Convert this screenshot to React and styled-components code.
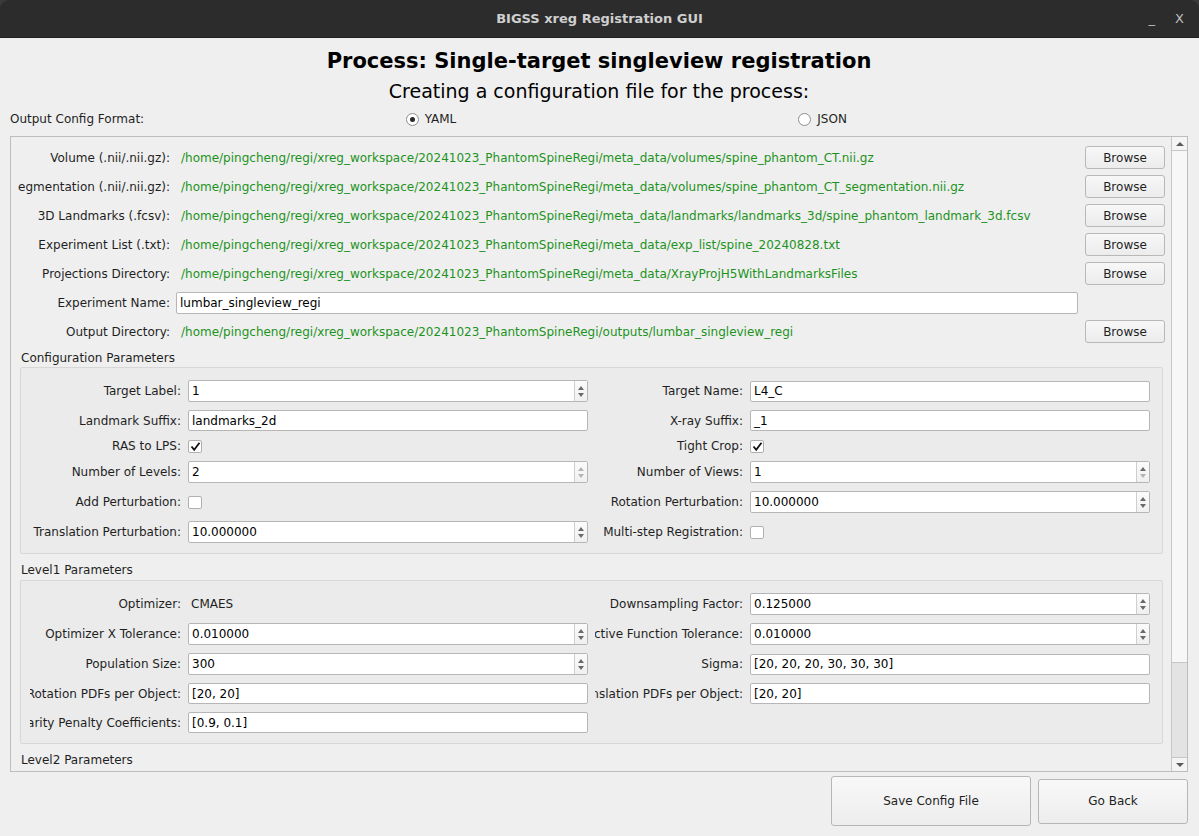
import React from "react";
import styled, { createGlobalStyle } from "styled-components";

const GlobalStyle = createGlobalStyle`
  html, body {
    margin: 0;
    padding: 0;
    background: #3a3a3a;
  }
  body {
    font-family: "DejaVu Sans", "Liberation Sans", sans-serif;
    font-size: 12px;
    color: #1f1f1f;
  }
  * {
    box-sizing: border-box;
  }
`;

const Window = styled.div`
  width: 1199px;
  height: 836px;
  display: flex;
  flex-direction: column;
  overflow: hidden;
`;

const TitleBar = styled.div`
  height: 38px;
  flex: none;
  background: #2c2c2c;
  border-radius: 9px 9px 0 0;
  display: flex;
  align-items: center;
  justify-content: center;
  position: relative;
  color: #cfcfcf;
  font-weight: bold;
  font-size: 13px;
  border-bottom: 1px solid #1f1f1f;
`;

const WindowControls = styled.div`
  position: absolute;
  right: 15px;
  top: 0;
  height: 100%;
  display: flex;
  align-items: center;
  gap: 20px;
  font-weight: normal;
  font-size: 13px;
  color: #bdbdbd;
`;

const Body = styled.div`
  flex: 1;
  background: #efefef;
  display: flex;
  flex-direction: column;
  padding: 11px 11px 0 10px;
  min-height: 0;
`;

const Heading = styled.div`
  text-align: center;
  font-weight: bold;
  font-size: 21px;
  color: #000;
  line-height: 24px;
`;

const SubHeading = styled.div`
  text-align: center;
  font-size: 19px;
  color: #000;
  line-height: 24px;
  margin-top: 6px;
`;

const FormatRow = styled.div`
  display: grid;
  grid-template-columns: 1fr 1fr 1fr;
  align-items: center;
  height: 20px;
  margin-top: 6px;
`;

const RadioItem = styled.label`
  display: flex;
  align-items: center;
  gap: 6px;
  padding-left: 3px;
`;

const RadioCircle = styled.span`
  width: 13px;
  height: 13px;
  border-radius: 50%;
  border: 1px solid #8e8e8e;
  background: #fff;
  display: flex;
  align-items: center;
  justify-content: center;

  &::after {
    content: "";
    display: ${(p) => (p.checked ? "block" : "none")};
    width: 5px;
    height: 5px;
    border-radius: 50%;
    background: #2a2a2a;
  }
`;

const ScrollArea = styled.div`
  margin-top: 7px;
  height: 636px;
  flex: none;
  border: 1px solid #bdbdbd;
  display: flex;
  background: #efefef;
`;

const ScrollContent = styled.div`
  flex: 1;
  overflow: hidden;
  padding: 9px 7px 0 7px;
  display: flex;
  flex-direction: column;
`;

const ScrollBar = styled.div`
  width: 16px;
  flex: none;
  border-left: 1px solid #c6c6c6;
  background: #e3e3e3;
  display: flex;
  flex-direction: column;
`;

const ScrollArrow = styled.div`
  height: 14px;
  flex: none;
  background: #f4f4f4;
  display: flex;
  align-items: center;
  justify-content: center;
  border-${(p) => (p.down ? "top" : "bottom")}: 1px solid #c6c6c6;

  &::after {
    content: "";
    border-left: 4px solid transparent;
    border-right: 4px solid transparent;
    border-${(p) => (p.down ? "top" : "bottom")}: 4px solid #5a5a5a;
  }
`;

const ScrollHandle = styled.div`
  height: 512px;
  flex: none;
  background: #f7f7f7;
  border-bottom: 1px solid #c6c6c6;
`;

const ScrollTrack = styled.div`
  flex: 1;
`;

const FileRow = styled.div`
  display: grid;
  grid-template-columns: 152px 1fr 80px;
  column-gap: 6px;
  align-items: center;
  height: 23px;
  flex: none;
  margin-bottom: 6px;
`;

const RowLabel = styled.div`
  display: flex;
  justify-content: flex-end;
  overflow: hidden;
  white-space: nowrap;
  color: #1f1f1f;
`;

const PathText = styled.div`
  color: #1d931d;
  padding-left: 5px;
  white-space: nowrap;
  overflow: hidden;
`;

const TextInput = styled.div`
  height: ${(p) => p.h || 21}px;
  background: #fff;
  border: 1px solid #b6b6b6;
  border-radius: 2px;
  display: flex;
  align-items: center;
  padding-left: 3px;
  color: #000;
  white-space: nowrap;
  overflow: hidden;
`;

const BrowseButton = styled.button`
  width: 80px;
  height: 23px;
  font-family: inherit;
  font-size: 12px;
  color: #1f1f1f;
  background: linear-gradient(#f7f7f7, #ececec);
  border: 1px solid #b8b8b8;
  border-radius: 3px;
  padding: 0;
  margin-left: 1px;
`;

const SectionTitle = styled.div`
  margin: ${(p) => p.top}px 0 ${(p) => p.bottom || 3}px 3px;
  height: 14px;
  flex: none;
  line-height: 14px;
  color: #1f1f1f;
`;

const GroupBox = styled.div`
  margin-left: 2px;
  width: 1143px;
  flex: none;
  background: #ebebeb;
  border: 1px solid #d7d7d7;
  border-radius: 2px;
  padding: 12px 7px 10px 9px;
  display: grid;
  grid-template-columns: 151px 400px 148px 400px;
  column-gap: 7px;
  row-gap: 8px;
  align-items: center;
`;

const SpinBox = styled.div`
  height: 22px;
  background: #fff;
  border: 1px solid #b6b6b6;
  border-radius: 2px;
  display: flex;
  align-items: stretch;
  color: #000;
`;

const SpinValue = styled.div`
  flex: 1;
  display: flex;
  align-items: center;
  padding-left: 3px;
`;

const SpinArrows = styled.div`
  width: 13px;
  border-left: 1px solid #cfcfcf;
  background: linear-gradient(#fbfbfb, #f0f0f0);
  display: flex;
  flex-direction: column;
  align-items: center;
  justify-content: center;
  gap: 3px;
`;

const Arrow = styled.span`
  border-left: 3px solid transparent;
  border-right: 3px solid transparent;
  border-${(p) => (p.down ? "top" : "bottom")}: 4px solid
    ${(p) => (p.dim ? "#b4b4b4" : "#6a6a6a")};
`;

const CheckBox = styled.span`
  width: 14px;
  height: 13px;
  border: 1px solid #b0b0b0;
  border-radius: 2px;
  background: #fff;
  display: flex;
  align-items: center;
  justify-content: center;
`;

const PlainValue = styled.div`
  padding-left: 3px;
  color: #1f1f1f;
`;

const Footer = styled.div`
  flex: 1;
  display: flex;
  justify-content: flex-end;
  align-items: center;
  gap: 7px;
  padding-bottom: 6px;
`;

const FooterButton = styled.button`
  width: ${(p) => p.w}px;
  height: ${(p) => p.h}px;
  font-family: inherit;
  font-size: 12px;
  color: #1f1f1f;
  background: linear-gradient(#f8f8f8, #ededed);
  border: 1px solid #b6b6b6;
  border-radius: 3px;
  padding: 0;
`;

const base = "/home/pingcheng/regi/xreg_workspace/20241023_PhantomSpineRegi";

const fileRows = [
  ["Volume (.nii/.nii.gz):", `${base}/meta_data/volumes/spine_phantom_CT.nii.gz`],
  ["Segmentation (.nii/.nii.gz):", `${base}/meta_data/volumes/spine_phantom_CT_segmentation.nii.gz`],
  ["3D Landmarks (.fcsv):", `${base}/meta_data/landmarks/landmarks_3d/spine_phantom_landmark_3d.fcsv`],
  ["Experiment List (.txt):", `${base}/meta_data/exp_list/spine_20240828.txt`],
  ["Projections Directory:", `${base}/meta_data/XrayProjH5WithLandmarksFiles`],
];

const configFields = [
  { label: "Target Label:", type: "spin", value: "1" },
  { label: "Target Name:", type: "text", value: "L4_C" },
  { label: "Landmark Suffix:", type: "text", value: "landmarks_2d" },
  { label: "X-ray Suffix:", type: "text", value: "_1" },
  { label: "RAS to LPS:", type: "check", value: true },
  { label: "Tight Crop:", type: "check", value: true },
  { label: "Number of Levels:", type: "spin", value: "2", dimUp: true, dimDown: true },
  { label: "Number of Views:", type: "spin", value: "1", dimDown: true },
  { label: "Add Perturbation:", type: "check", value: false },
  { label: "Rotation Perturbation:", type: "spin", value: "10.000000" },
  { label: "Translation Perturbation:", type: "spin", value: "10.000000" },
  { label: "Multi-step Registration:", type: "check", value: false },
];

const levelFields = [
  { label: "Optimizer:", type: "plain", value: "CMAES" },
  { label: "Downsampling Factor:", type: "spin", value: "0.125000" },
  { label: "Optimizer X Tolerance:", type: "spin", value: "0.010000" },
  { label: "Objective Function Tolerance:", type: "spin", value: "0.010000" },
  { label: "Population Size:", type: "spin", value: "300" },
  { label: "Sigma:", type: "text", value: "[20, 20, 20, 30, 30, 30]" },
  { label: "Number of Rotation PDFs per Object:", type: "text", value: "[20, 20]" },
  { label: "Number of Translation PDFs per Object:", type: "text", value: "[20, 20]" },
  { label: "Similarity Penalty Coefficients:", type: "text", value: "[0.9, 0.1]" },
];

const CheckMark = () => (
  <svg width="11" height="11" viewBox="0 0 11 11">
    <path d="M1.5 5.5 L4.2 8.8 L9.5 1.8" fill="none" stroke="#111" strokeWidth="1.8" />
  </svg>
);

const FieldWidget = ({ field }) => {
  if (field.type === "spin") {
    return (
      <SpinBox>
        <SpinValue>{field.value}</SpinValue>
        <SpinArrows>
          <Arrow dim={field.dimUp} />
          <Arrow down dim={field.dimDown} />
        </SpinArrows>
      </SpinBox>
    );
  }
  if (field.type === "check") {
    return <div><CheckBox>{field.value && <CheckMark />}</CheckBox></div>;
  }
  if (field.type === "plain") {
    return <PlainValue>{field.value}</PlainValue>;
  }
  return <TextInput>{field.value}</TextInput>;
};

const FieldGrid = ({ fields }) => (
  <GroupBox>
    {fields.map((f) => (
      <React.Fragment key={f.label}>
        <RowLabel>
          <span>{f.label}</span>
        </RowLabel>
        <FieldWidget field={f} />
      </React.Fragment>
    ))}
  </GroupBox>
);

const App = () => (
  <Window>
    <GlobalStyle />
    <TitleBar>
      BIGSS xreg Registration GUI
      <WindowControls>
        <span>_</span>
        <span>X</span>
      </WindowControls>
    </TitleBar>
    <Body>
      <Heading>Process: Single-target singleview registration</Heading>
      <SubHeading>Creating a configuration file for the process:</SubHeading>
      <FormatRow>
        <div>Output Config Format:</div>
        <RadioItem>
          <RadioCircle checked />
          YAML
        </RadioItem>
        <RadioItem>
          <RadioCircle />
          JSON
        </RadioItem>
      </FormatRow>
      <ScrollArea>
        <ScrollContent>
          {fileRows.map(([label, path]) => (
            <FileRow key={label}>
              <RowLabel>
                <span>{label}</span>
              </RowLabel>
              <PathText>{path}</PathText>
              <BrowseButton>Browse</BrowseButton>
            </FileRow>
          ))}
          <FileRow>
            <RowLabel>
              <span>Experiment Name:</span>
            </RowLabel>
            <TextInput h={22}>lumbar_singleview_regi</TextInput>
            <div />
          </FileRow>
          <FileRow>
            <RowLabel>
              <span>Output Directory:</span>
            </RowLabel>
            <PathText>{`${base}/outputs/lumbar_singleview_regi`}</PathText>
            <BrowseButton>Browse</BrowseButton>
          </FileRow>
          <SectionTitle top={2} bottom={2}>Configuration Parameters</SectionTitle>
          <FieldGrid fields={configFields} />
          <SectionTitle top={9}>Level1 Parameters</SectionTitle>
          <FieldGrid fields={levelFields} />
          <SectionTitle top={9}>Level2 Parameters</SectionTitle>
        </ScrollContent>
        <ScrollBar>
          <ScrollArrow />
          <ScrollHandle />
          <ScrollTrack />
          <ScrollArrow down />
        </ScrollBar>
      </ScrollArea>
      <Footer>
        <FooterButton w={200} h={50}>Save Config File</FooterButton>
        <FooterButton w={150} h={45}>Go Back</FooterButton>
      </Footer>
    </Body>
  </Window>
);

export default App;
